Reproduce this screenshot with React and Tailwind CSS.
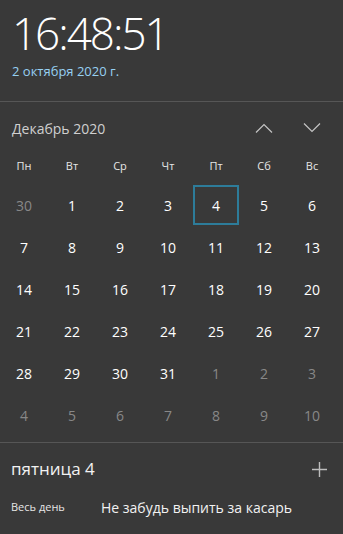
import React from 'react'

const weekdays = ['Пн', 'Вт', 'Ср', 'Чт', 'Пт', 'Сб', 'Вс']

// December 2020 grid, with spill-over days from Nov/Jan
const days = [
  [30, false], [1, true], [2, true], [3, true], [4, true], [5, true], [6, true],
  [7, true], [8, true], [9, true], [10, true], [11, true], [12, true], [13, true],
  [14, true], [15, true], [16, true], [17, true], [18, true], [19, true], [20, true],
  [21, true], [22, true], [23, true], [24, true], [25, true], [26, true], [27, true],
  [28, true], [29, true], [30, true], [31, true], [1, false], [2, false], [3, false],
  [4, false], [5, false], [6, false], [7, false], [8, false], [9, false], [10, false],
]

function Chevron({ up }) {
  return (
    <svg width="18" height="10" viewBox="0 0 18 10" fill="none" stroke="#c4c4c4" strokeWidth="1.2">
      {up ? <path d="M1 9.5 L9 1.5 L17 9.5" /> : <path d="M1 0.5 L9 8.5 L17 0.5" />}
    </svg>
  )
}

export default function App() {
  return (
    <div className="w-[343px] h-[534px] bg-[#393939] text-white overflow-hidden font-['Open_Sans',sans-serif]">

      {/* ── Clock ─────────────────────────────── */}
      <div className="h-[101px] px-3 pt-[3px]">
        <div className="text-[44px] font-light leading-[60px] tracking-[-2px]">16:48:51</div>
        <div className="text-[13px] text-[#96d0f2] leading-[18px] -mt-[1px]">2 октября 2020 г.</div>
      </div>

      <div className="border-t border-[#565656]" />

      {/* ── Month header ──────────────────────── */}
      <div className="flex items-center h-[49px] pl-3 pr-[22px]">
        <span className="text-[14px] text-[#d0d0d0] flex-1 pt-[3px]">Декабрь 2020</span>
        <div className="flex gap-[30px] items-center pt-[2px]">
          <Chevron up />
          <Chevron />
        </div>
      </div>

      {/* ── Grid ──────────────────────────────── */}
      <div className="w-[336px]">
        <div className="grid grid-cols-7 h-[33px] pb-[3px] items-center">
          {weekdays.map(d => (
            <div key={d} className="text-center text-[11px] text-[#e6e6e6]">{d}</div>
          ))}
        </div>
        <div className="grid grid-cols-7">
          {days.map(([n, cur], i) => (
            <div key={i} className="h-[42px] flex items-center justify-center p-[1px]">
              <div
                className={`w-full h-full flex items-center justify-center text-[14px] ${
                  cur ? 'text-white' : 'text-[#888888]'
                } ${i === 4 ? 'border-2 border-[#2d7c9a]' : ''}`}
              >
                {n}
              </div>
            </div>
          ))}
        </div>
      </div>

      <div className="border-t border-[#565656] mt-[6px]" />

      {/* ── Agenda ────────────────────────────── */}
      <div className="px-[11px]">
        <div className="flex items-center justify-between h-[52px]">
          <span className="text-[17px] text-[#f2f2f2]">пятница 4</span>
          <svg width="15" height="15" viewBox="0 0 15 15" stroke="#bdbdbd" strokeWidth="1.4" className="mr-[5px]">
            <path d="M7.5 0 V15 M0 7.5 H15" />
          </svg>
        </div>
        <div className="flex items-center mt-[2px]">
          <span className="text-[11px] text-[#e6e6e6] w-[90px]">Весь день</span>
          <span className="text-[14px] text-[#f2f2f2]">Не забудь выпить за касарь</span>
        </div>
      </div>
    </div>
  )
}
